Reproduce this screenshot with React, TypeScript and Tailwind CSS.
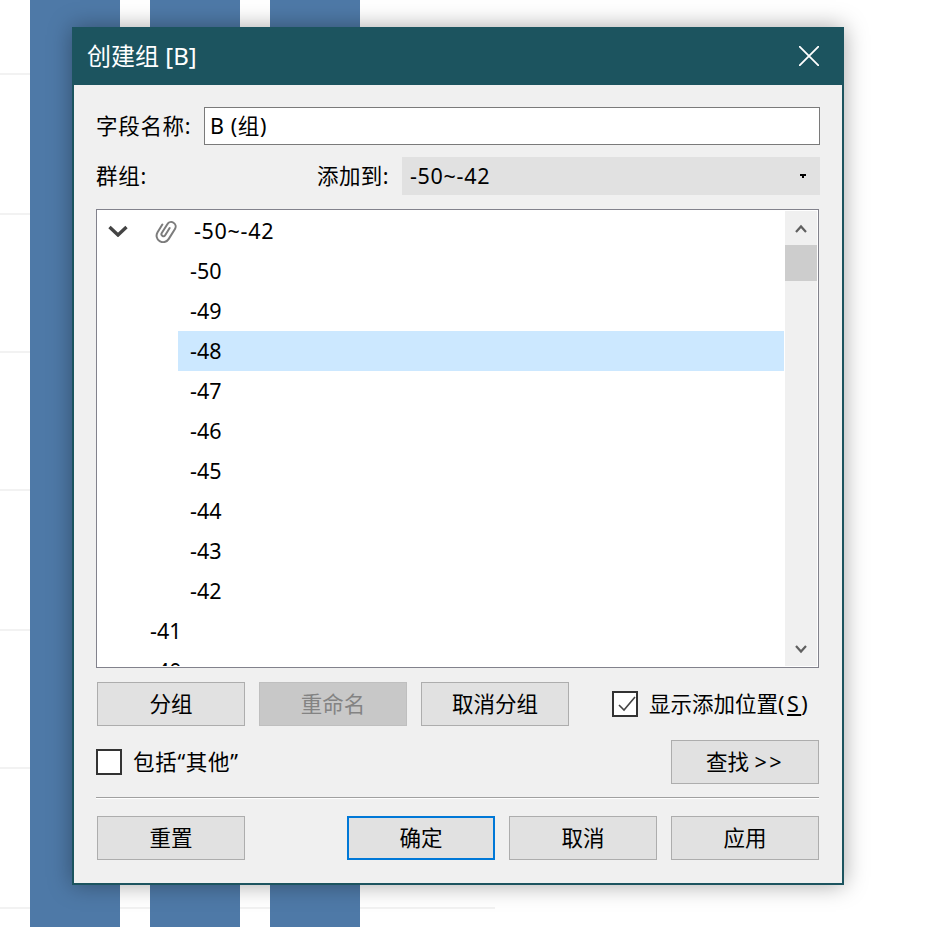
import type { ReactNode } from "react";

const rows = ["-50", "-49", "-48", "-47", "-46", "-45", "-44", "-43", "-42"];

function Button({ children, focused, disabled }: { children: ReactNode; focused?: boolean; disabled?: boolean }) {
  const look = focused
    ? "border-2 border-[#0078d7] bg-[#e1e1e1] text-black"
    : disabled
      ? "border border-[#bfbfbf] bg-[#c8c8c8] text-[#838383]"
      : "border border-[#adadad] bg-[#e1e1e1] text-black";
  return (
    <div className={`flex h-[44px] w-[148px] shrink-0 items-center justify-center whitespace-pre text-[21.5px] leading-none ${look}`}>
      {children}
    </div>
  );
}

function Checkbox({ checked }: { checked?: boolean }) {
  return (
    <div className="h-[26px] w-[26px] shrink-0 border-2 border-[#333] bg-white">
      {checked && (
        <svg width="22" height="22" viewBox="0 0 22 22" fill="none" stroke="#444" strokeWidth="1.6">
          <path d="M5 12l5 5L21 4" />
        </svg>
      )}
    </div>
  );
}

function ChartBackground() {
  return (
    <div className="relative h-full w-full">
      <div className="flex h-full gap-[30px] pl-[30px]">
        <div className="h-full w-[90px] bg-[#4e79a7]" />
        <div className="h-full w-[90px] bg-[#4e79a7]" />
        <div className="h-full w-[90px] bg-[#4e79a7]" />
      </div>
      <svg className="absolute inset-0 -z-10" width="934" height="927">
        {[73, 213, 351, 489, 629, 767, 907].map((y) => (
          <rect key={y} x="0" y={y} width="495" height="2" fill="#f2f2f2" />
        ))}
      </svg>
    </div>
  );
}

export default function App() {
  return (
    <div className="relative isolate h-[927px] w-[934px] overflow-hidden bg-white font-['Noto_Sans','Noto_Sans_CJK_SC',sans-serif] text-[21.5px] text-black">
      <ChartBackground />

      <div className="absolute left-[72px] top-[27px] w-[772px] border-x-2 border-b-2 border-[#1c545f] bg-[#f0f0f0] shadow-[0_0_22px_rgba(0,0,0,0.35)]">
        <div className="-mx-[2px] flex h-[58px] items-center justify-between bg-[#1c545f] pl-[15px] pr-[25px] text-[24px] text-white">
          <span>创建组 [B]</span>
          <svg width="20" height="20" viewBox="0 0 20 20" stroke="#fff" strokeWidth="1.8">
            <path d="M0 0l20 20M20 0L0 20" />
          </svg>
        </div>

        <div className="flex flex-col pl-[22px] pr-[22px] pt-[22px] pb-[23px]">
          <div className="flex h-[38px] items-center">
            <span className="w-[108px] leading-none tracking-[0.7px]">字段名称:</span>
            <div className="flex h-full flex-1 items-center border border-[#7a7a7a] bg-white pl-[5px] leading-none tracking-[0.6px]">
              B (组)
            </div>
          </div>

          <div className="mt-[12px] flex h-[38px] items-center">
            <span className="w-[221px] leading-none tracking-[0.7px]">群组:</span>
            <span className="w-[85px] leading-none tracking-[0.4px]">添加到:</span>
            <div className="flex h-full flex-1 items-center justify-between bg-[#e1e1e1] pl-[8px] pr-[14px] leading-none">
              <span className="tracking-[0.7px]">-50~-42</span>
              <svg width="6" height="4" viewBox="0 0 6 4" fill="#000">
                <path d="M0 0h6v2H4v2H2V2H0z" />
              </svg>
            </div>
          </div>

          <div className="mt-[14px] flex h-[459px] w-[723px] overflow-hidden border border-[#82828c] bg-white p-px">
            <div className="mr-px flex-1 overflow-hidden">
              <div className="flex h-[40px] items-center">
                <svg className="ml-[10px]" width="20" height="12" viewBox="0 0 20 12" fill="none" stroke="#444" strokeWidth="3.4">
                  <path d="M1.5 2L10 10l8.5-8" />
                </svg>
                <svg className="ml-[26px]" width="24" height="24" viewBox="0 0 24 24" fill="none" stroke="#7c7c7c" strokeWidth="2" strokeLinecap="round">
                  <path transform="rotate(32 12 12)" d="M13.500 7.500v8.500a2 2 0 0 1-4 0V5.500a4.500 4.500 0 0 1 9 0V17.500a6.500 6.500 0 0 1-13 0V8.500" />
                </svg>
                <span className="ml-[16px] leading-none tracking-[0.7px]">-50~-42</span>
              </div>
              {rows.map((row) => (
                <div
                  key={row}
                  className={`ml-[80px] flex h-[40px] items-center pl-[12px] leading-none ${row === "-48" ? "bg-[#cce8ff]" : ""}`}
                >
                  {row}
                </div>
              ))}
              <div className="flex h-[40px] items-center pl-[52px] leading-none">-41</div>
              <div className="flex h-[40px] items-center pl-[52px] leading-none">-40</div>
            </div>

            <div className="flex w-[32px] shrink-0 flex-col bg-[#f0f0f0]">
              <div className="flex h-[34px] items-center justify-center">
                <svg width="12" height="9" viewBox="0 0 12 9" fill="none" stroke="#606060" strokeWidth="2.2">
                  <path d="M1 8l5-5.500L11 8" />
                </svg>
              </div>
              <div className="h-[36px] bg-[#cdcdcd]" />
              <div className="flex-1" />
              <div className="flex h-[34px] items-center justify-center">
                <svg width="12" height="9" viewBox="0 0 12 9" fill="none" stroke="#606060" strokeWidth="2.2">
                  <path d="M1 1l5 5.500L11 1" />
                </svg>
              </div>
            </div>
          </div>

          <div className="mt-[14px] flex h-[44px] items-center gap-[14px] pl-px">
            <Button>分组</Button>
            <Button disabled>重命名</Button>
            <Button>取消分组</Button>
            <div className="ml-[29px] flex items-center gap-[11px] leading-none">
              <Checkbox checked />
              <span className="whitespace-nowrap">
                显示添加位置<span className="tracking-[2.5px]">(<span className="underline">S</span>)</span>
              </span>
            </div>
          </div>

          <div className="mt-[14px] flex h-[44px] items-center justify-between pr-px">
            <div className="flex items-center gap-[11px] leading-none">
              <Checkbox />
              <span className="tracking-[0.7px]">包括“其他”</span>
            </div>
            <Button>
              查找 <span className="tracking-[2.5px]">{">>"}</span>
            </Button>
          </div>

          <div className="mt-[13px] h-[2px] w-[723px] border-t border-b border-t-[#a0a0a0] border-b-white" />

          <div className="mt-[17px] flex h-[44px] items-center gap-[14px] pl-px">
            <Button>重置</Button>
            <div className="ml-[88px]">
              <Button focused>确定</Button>
            </div>
            <Button>取消</Button>
            <Button>应用</Button>
          </div>
        </div>
      </div>
    </div>
  );
}
